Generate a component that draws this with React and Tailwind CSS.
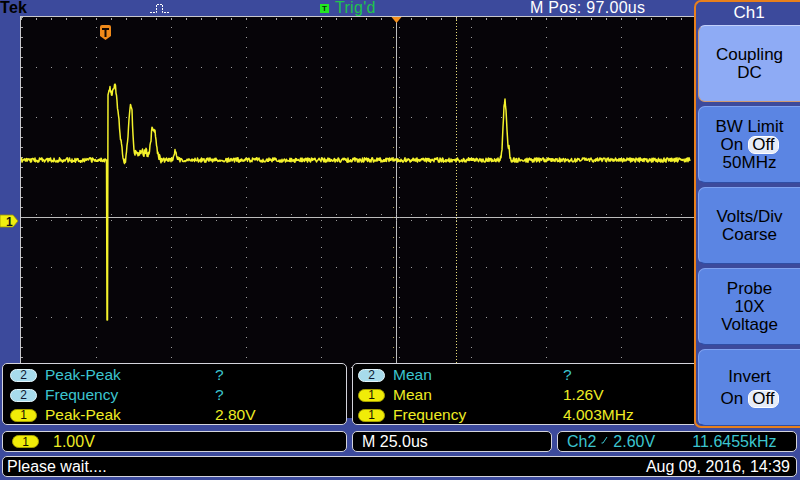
import React from 'react';

// deterministic noise so the trace looks the same on every run
function makeRng(seed) {
  let s = seed;
  return () => {
    s = (s + 0x6d2b79f5) | 0;
    let t = Math.imul(s ^ (s >>> 15), 1 | s);
    t = (t + Math.imul(t ^ (t >>> 7), 61 | t)) ^ t;
    return ((t ^ (t >>> 14)) >>> 0) / 4294967296;
  };
}

const ENVELOPE = [
  [21, 160], [106.5, 160], [107, 320], [107.5, 320], [108, 95], [110, 88], [112, 93],
  [114, 86], [115, 83], [116, 92], [117, 100], [118, 112], [120, 132], [122, 150],
  [124, 160], [125, 161], [126, 157], [128, 135], [129, 118], [130, 108], [131, 104],
  [132, 112], [133, 135], [134, 150], [136, 154], [140, 152], [142, 149], [144, 154],
  [146, 151], [148, 156], [150, 148], [151, 138], [152, 130], [153, 128], [154, 131],
  [155, 133], [156, 140], [157, 150], [159, 157], [161, 160], [172, 160], [174, 155],
  [175, 151], [176, 154], [178, 159], [180, 160], [500, 160], [502, 152], [503, 128],
  [504, 106], [505, 101], [506, 108], [507, 132], [508, 146], [509, 148], [510, 155],
  [511, 160], [690, 160],
];

function envelopeAt(x) {
  for (let i = 0; i < ENVELOPE.length - 1; i++) {
    const [x0, y0] = ENVELOPE[i];
    const [x1, y1] = ENVELOPE[i + 1];
    if (x >= x0 && x <= x1) return y0 + ((y1 - y0) * (x - x0)) / (x1 - x0 || 1);
  }
  return 160;
}

const TRACE = (() => {
  const rnd = makeRng(7);
  const pts = [];
  for (let x = 21; x <= 690; x += 0.5) {
    const y = envelopeAt(x);
    const inSpike = x >= 106.5 && x <= 108;
    const bumpy = (x > 108 && x < 162) || (x > 500 && x < 511);
    const amp = inSpike ? 0 : bumpy ? 3.4 : 2.2;
    pts.push(`${x},${(y + (rnd() * 2 - 1) * amp).toFixed(1)}`);
  }
  return pts.join(' ');
})();

const V_DOTTED = [96, 171, 246, 321, 471, 546, 621];
const H_DOTTED = [67, 117, 167, 267, 317, 367];

function Graticule() {
  return (
    <svg width="694" height="412" viewBox="0 16 694 412" className="block" shapeRendering="crispEdges">
      <rect x="20" y="16" width="752" height="402" fill="#060408" />
      <line x1="20" y1="16.5" x2="694" y2="16.5" stroke="#c8c8cc" />
      <line x1="20.5" y1="16" x2="20.5" y2="418" stroke="#c8c8cc" />
      {/* edge ticks */}
      <line x1="21" y1="18.5" x2="694" y2="18.5" stroke="#a8a8a8" strokeWidth="2" strokeDasharray="1 14" strokeDashoffset="-15" />
      <line x1="22" y1="17" x2="22" y2="418" stroke="#a8a8a8" strokeWidth="2" strokeDasharray="1 9" strokeDashoffset="-10" />
      {V_DOTTED.map((x) => (
        <line key={x} x1={x + 0.5} y1="27" x2={x + 0.5} y2="418" stroke="#9c9c9c" strokeDasharray="1 9" />
      ))}
      {H_DOTTED.map((y) => (
        <line key={y} x1="36" y1={y + 0.5} x2="694" y2={y + 0.5} stroke="#9c9c9c" strokeDasharray="1 14" />
      ))}
      {/* centre cross */}
      <line x1="21" y1="217.5" x2="694" y2="217.5" stroke="#bcbcbc" />
      <line x1="396.5" y1="17" x2="396.5" y2="418" stroke="#bcbcbc" />
      <line x1="36" y1="214.5" x2="694" y2="214.5" stroke="#9c9c9c" strokeDasharray="1 14" />
      <line x1="36" y1="220.5" x2="694" y2="220.5" stroke="#9c9c9c" strokeDasharray="1 14" />
      <line x1="393.5" y1="27" x2="393.5" y2="418" stroke="#b8a860" strokeDasharray="1 9" />
      <line x1="399.5" y1="27" x2="399.5" y2="418" stroke="#9c9c9c" strokeDasharray="1 9" />
      {/* trigger time marker */}
      <line x1="456.5" y1="17" x2="456.5" y2="418" stroke="#e6dc78" strokeDasharray="1 2" />
      <polygon points="391.5,17 401.5,17 396.5,23" fill="#f3901e" shapeRendering="auto" />
      {/* trigger level "T" flag */}
      <g shapeRendering="auto">
        <path d="M100 27 Q100 25 102 25 H109 Q111 25 111 27 V36 L105.5 40 L100 36 Z" fill="#f08a1a" />
        <path d="M102 28 H109 V30 H106.5 V37 H104.5 V30 H102 Z" fill="#140800" />
      </g>
      {/* ch1 ground marker */}
      <g shapeRendering="auto">
        <path d="M0 215 H13 L18 221 L13 227 H0 Z" fill="#f0ee10" stroke="#9a9400" strokeWidth="0.8" />
        <text x="6" y="225.5" fontSize="12" fontWeight="700" fill="#111" fontFamily="Liberation Sans, Arial, sans-serif">1</text>
      </g>
      <polyline points={TRACE} fill="none" stroke="#f4f22c" strokeWidth="1.5" strokeLinejoin="round" shapeRendering="auto" />
    </svg>
  );
}

const CYAN = 'text-[#3cc5cf]';
const YELLOW = 'text-[#eeec24]';

function Badge({ ch }) {
  return ch === 2 ? (
    <span className="w-[27px] h-[13px] shrink-0 rounded-full bg-[#a7dbec] border border-[#e4f6fc] flex items-center justify-center text-[12px] leading-none text-[#0c1830]">
      2
    </span>
  ) : (
    <span className="w-[27px] h-[13px] shrink-0 rounded-full bg-[#f0ec08] border border-[#a8a200] flex items-center justify-center text-[12px] leading-none text-[#141200]">
      1
    </span>
  );
}

function MeasRow({ ch, label, value }) {
  const color = ch === 2 ? CYAN : YELLOW;
  return (
    <div className={`flex items-center h-[20px] ${color}`}>
      <Badge ch={ch} />
      <span className="ml-[8px] w-[170px]">{label}</span>
      <span>{value}</span>
    </div>
  );
}

function MeasBox({ rows, className }) {
  return (
    <div className={`h-[62px] bg-black border border-[#d4d4dc] rounded-[5px] pt-[1px] text-[15.5px] leading-[20px] ${className}`}>
      {rows.map((r, i) => (
        <MeasRow key={i} {...r} />
      ))}
    </div>
  );
}

function OffPill() {
  return (
    <span className="inline-flex items-center h-[18px] px-[3px] ml-[5px] rounded-[7px] bg-[#e6ecf8] border border-[#ffffff] text-black">
      Off
    </span>
  );
}

function MenuButton({ children, selected }) {
  return (
    <div
      className={`h-[77px] shrink-0 rounded-l-[7px] flex flex-col items-center justify-center text-[17px] leading-[18px] text-black ${
        selected
          ? 'bg-[#8eabf5] border border-r-0 border-[#c2d0fa] border-b-[#cf9a70] border-l-[#cf9a70]'
          : 'bg-[#5b85e3] border border-r-0 border-[#7fa2f0] border-b-[#2f4ea6]'
      }`}
    >
      {children}
    </div>
  );
}

function SlopeIcon() {
  return (
    <svg width="7" height="9" viewBox="0 0 7 9" className="mx-[5px] mb-[4px]">
      <path d="M0.5 8 H2 L6 2" stroke="#3cc5cf" strokeWidth="1" fill="none" />
    </svg>
  );
}

export default function App() {
  return (
    <div className="w-[800px] h-[480px] bg-[#3c4a9c] flex flex-col overflow-hidden font-['Liberation_Sans',Arial,sans-serif]">
      <div className="flex h-[428px]">
        {/* left: status bar + graticule */}
        <div className="w-[694px] flex flex-col">
          <div className="h-[16px] flex items-center text-[16px] leading-[16px] tracking-[0.3px]">
            <span className="w-[150px] font-bold text-black">Tek</span>
            <div className="w-[170px] flex items-center">
              <svg width="19" height="11" viewBox="0 0 19 11">
                <path d="M0 9.5 H6.5 V1.5 H12.5 V9.5 H19" stroke="#ffffff" strokeWidth="1" fill="none" strokeDasharray="2 1" />
              </svg>
            </div>
            <div className="w-[210px] flex items-center">
              <span className="w-[9px] h-[9px] bg-[#22e622] text-[8px] leading-[9px] font-bold text-[#063006] flex items-center justify-center">
                T
              </span>
              <span className="ml-[6px] text-[#1fc64c]">Trig'd</span>
            </div>
            <span className="text-white">M Pos: 97.00us</span>
          </div>
          <div className="relative h-[412px] overflow-hidden">
            <Graticule />
            <div className="absolute top-[347px] left-[2px] flex gap-[5px]">
              <MeasBox
                className="w-[345px] pl-[7px]"
                rows={[
                  { ch: 2, label: 'Peak-Peak', value: '?' },
                  { ch: 2, label: 'Frequency', value: '?' },
                  { ch: 1, label: 'Peak-Peak', value: '2.80V' },
                ]}
              />
              <MeasBox
                className="w-[350px] pl-[5px]"
                rows={[
                  { ch: 2, label: 'Mean', value: '?' },
                  { ch: 1, label: 'Mean', value: '1.26V' },
                  { ch: 1, label: 'Frequency', value: '4.003MHz' },
                ]}
              />
            </div>
          </div>
        </div>

        {/* right: Ch1 side menu */}
        <div className="w-[106px] h-[428px] border-2 border-r-0 border-[#e8801c] rounded-l-[7px] bg-[#3c4a9c] pl-[2px] flex flex-col gap-[4px]">
          <div className="h-[19px] shrink-0 flex items-end justify-center text-white text-[17px] leading-[17px]">Ch1</div>
          <MenuButton selected>
            <span>Coupling</span>
            <span>DC</span>
          </MenuButton>
          <MenuButton>
            <span>BW Limit</span>
            <span className="flex items-center">
              On
              <OffPill />
            </span>
            <span>50MHz</span>
          </MenuButton>
          <MenuButton>
            <span>Volts/Div</span>
            <span>Coarse</span>
          </MenuButton>
          <MenuButton>
            <span>Probe</span>
            <span>10X</span>
            <span>Voltage</span>
          </MenuButton>
          <MenuButton>
            <span className="mb-[4px]">Invert</span>
            <span className="flex items-center">
              On
              <OffPill />
            </span>
          </MenuButton>
        </div>
      </div>

      {/* bottom readouts */}
      <div className="flex flex-col gap-[4px] pt-[3px] px-[2px] text-[16px] leading-[19px]">
        <div className="flex gap-[5px] h-[21px]">
          <div className="w-[345px] bg-black border border-[#d4d4dc] rounded-[5px] flex items-center pl-[9px]">
            <Badge ch={1} />
            <span className={`ml-[14px] ${YELLOW}`}>1.00V</span>
          </div>
          <div className="w-[200px] bg-black border border-[#d4d4dc] rounded-[5px] flex items-center pl-[9px] text-white">
            M 25.0us
          </div>
          <div className={`w-[240px] bg-black border border-[#d4d4dc] rounded-[5px] flex items-center pl-[9px] ${CYAN}`}>
            <span>Ch2</span>
            <SlopeIcon />
            <span className="w-[79px]">2.60V</span>
            <span>11.6455kHz</span>
          </div>
        </div>
        <div className="h-[21px] w-[795px] bg-black border border-[#d4d4dc] rounded-[5px] flex items-center justify-between px-[4px] text-white">
          <span>Please wait....</span>
          <span className="pr-[2px]">Aug 09, 2016, 14:39</span>
        </div>
      </div>
    </div>
  );
}
